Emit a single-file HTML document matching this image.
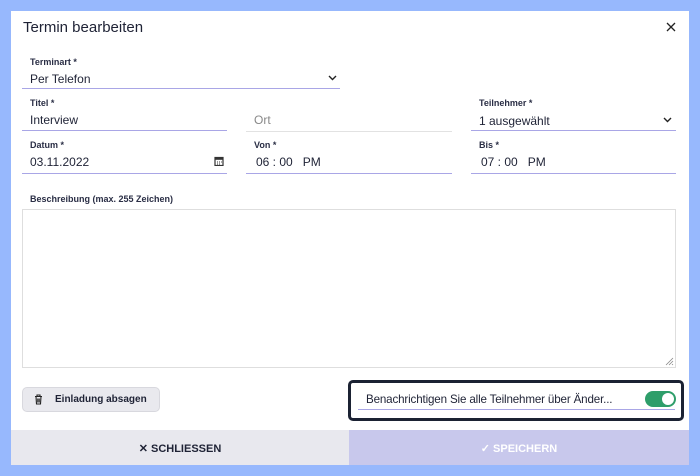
<!DOCTYPE html>
<html><head><meta charset="utf-8"><style>
*{box-sizing:border-box;margin:0;padding:0}
body{width:700px;height:476px;background:#97b8fd;font-family:"Liberation Sans",sans-serif;color:#1e2235;position:relative;overflow:hidden}
.dlg{position:absolute;left:11px;top:11px;width:678px;height:454px;background:#fff}
.a{position:absolute;white-space:nowrap}
.lbl{font-size:9px;font-weight:bold;color:#2a2e45}
.val{font-size:12px;color:#1e2235}
.ul{position:absolute;height:1px;background:#a9a6e6}
</style></head><body>
<div class="dlg"></div>
<div class="a" style="left:23px;top:19px;font-size:15px">Termin bearbeiten</div>
<svg class="a" style="left:666px;top:22px" width="10" height="10"><path d="M1 1L9 9M9 1L1 9" stroke="#222" stroke-width="1.3"/></svg>

<div class="a lbl" style="left:30px;top:57px">Terminart *</div>
<div class="a val" style="left:30px;top:72px">Per Telefon</div>
<svg class="a" style="left:328px;top:75px" width="9" height="6"><path d="M1 1L4.5 4.5L8 1" stroke="#222" stroke-width="1.4" fill="none"/></svg>
<div class="ul" style="left:22px;top:88px;width:318px"></div>

<div class="a lbl" style="left:30px;top:98px">Titel *</div>
<div class="a val" style="left:30px;top:113px">Interview</div>
<div class="ul" style="left:22px;top:130px;width:205px"></div>
<div class="a val" style="left:254px;top:113px;color:#888">Ort</div>
<div class="ul" style="left:246px;top:131px;width:206px;background:#e2e2e2"></div>
<div class="a lbl" style="left:479px;top:98px">Teilnehmer *</div>
<div class="a val" style="left:479px;top:114px">1 ausgewählt</div>
<svg class="a" style="left:663px;top:117px" width="9" height="6"><path d="M1 1L4.5 4.5L8 1" stroke="#222" stroke-width="1.4" fill="none"/></svg>
<div class="ul" style="left:471px;top:130px;width:205px"></div>

<div class="a lbl" style="left:30px;top:140px">Datum *</div>
<div class="a val" style="left:30px;top:155px">03.11.2022</div>
<svg class="a" style="left:214px;top:156px" width="10" height="10"><rect x="1" y="1.5" width="8" height="8" fill="none" stroke="#333" stroke-width="1.2"/><rect x="1" y="1.5" width="8" height="2.3" fill="#333"/><path d="M3 6h1M5 6h1M7 6h0.8M3 8h1M5 8h1" stroke="#333"/></svg>
<div class="ul" style="left:22px;top:173px;width:205px"></div>
<div class="a lbl" style="left:254px;top:140px">Von *</div>
<div class="a val" style="left:256px;top:155px">06 : 00&nbsp;&nbsp; PM</div>
<div class="ul" style="left:246px;top:173px;width:206px"></div>
<div class="a lbl" style="left:479px;top:140px">Bis *</div>
<div class="a val" style="left:481px;top:155px">07 : 00&nbsp;&nbsp; PM</div>
<div class="ul" style="left:471px;top:173px;width:205px"></div>

<div class="a lbl" style="left:30px;top:194px">Beschreibung (max. 255 Zeichen)</div>
<div class="a" style="left:22px;top:209px;width:654px;height:159px;border:1px solid #dedede"></div>
<svg class="a" style="left:664px;top:356px" width="10" height="10"><path d="M9 2L2 9M9 5L5 9M9 8L8 9" stroke="#888" stroke-width="0.8"/></svg>

<div class="a" style="left:22px;top:387px;width:138px;height:25px;background:#e9e9ee;border:1px solid #d8d8de;border-radius:5px"></div>
<svg class="a" style="left:34px;top:394px" width="9" height="11"><path d="M1 2.5h7M3 2.5V1h3v1.5M2 2.5l.5 7.5h4l.5-7.5M3.8 4.5v4M5.2 4.5v4" stroke="#222" fill="none" stroke-width="1.1"/></svg>
<div class="a" style="left:55px;top:394px;font-size:10px;font-weight:bold">Einladung absagen</div>

<div class="a" style="left:348px;top:380px;width:336px;height:41px;border:3px solid #1b2233;border-radius:5px"></div>
<div class="a" style="left:366px;top:393px;font-size:11.6px;letter-spacing:-0.15px">Benachrichtigen Sie alle Teilnehmer über Änder...</div>
<div class="ul" style="left:358px;top:409px;width:317px"></div>
<div class="a" style="left:645px;top:391px;width:31px;height:16px;background:#2e9e6a;border-radius:8px"><div style="position:absolute;right:2px;top:2px;width:12px;height:12px;background:#fff;border-radius:50%"></div></div>

<div class="a" style="left:11px;top:430px;width:338px;height:35px;background:#e8e8ee;text-align:center;line-height:39px;font-size:11px;font-weight:bold">✕ SCHLIESSEN</div>
<div class="a" style="left:349px;top:430px;width:340px;height:35px;background:#c8c8ec;text-align:center;line-height:39px;font-size:11px;font-weight:bold;color:#fff">✓ SPEICHERN</div>
</body></html>
